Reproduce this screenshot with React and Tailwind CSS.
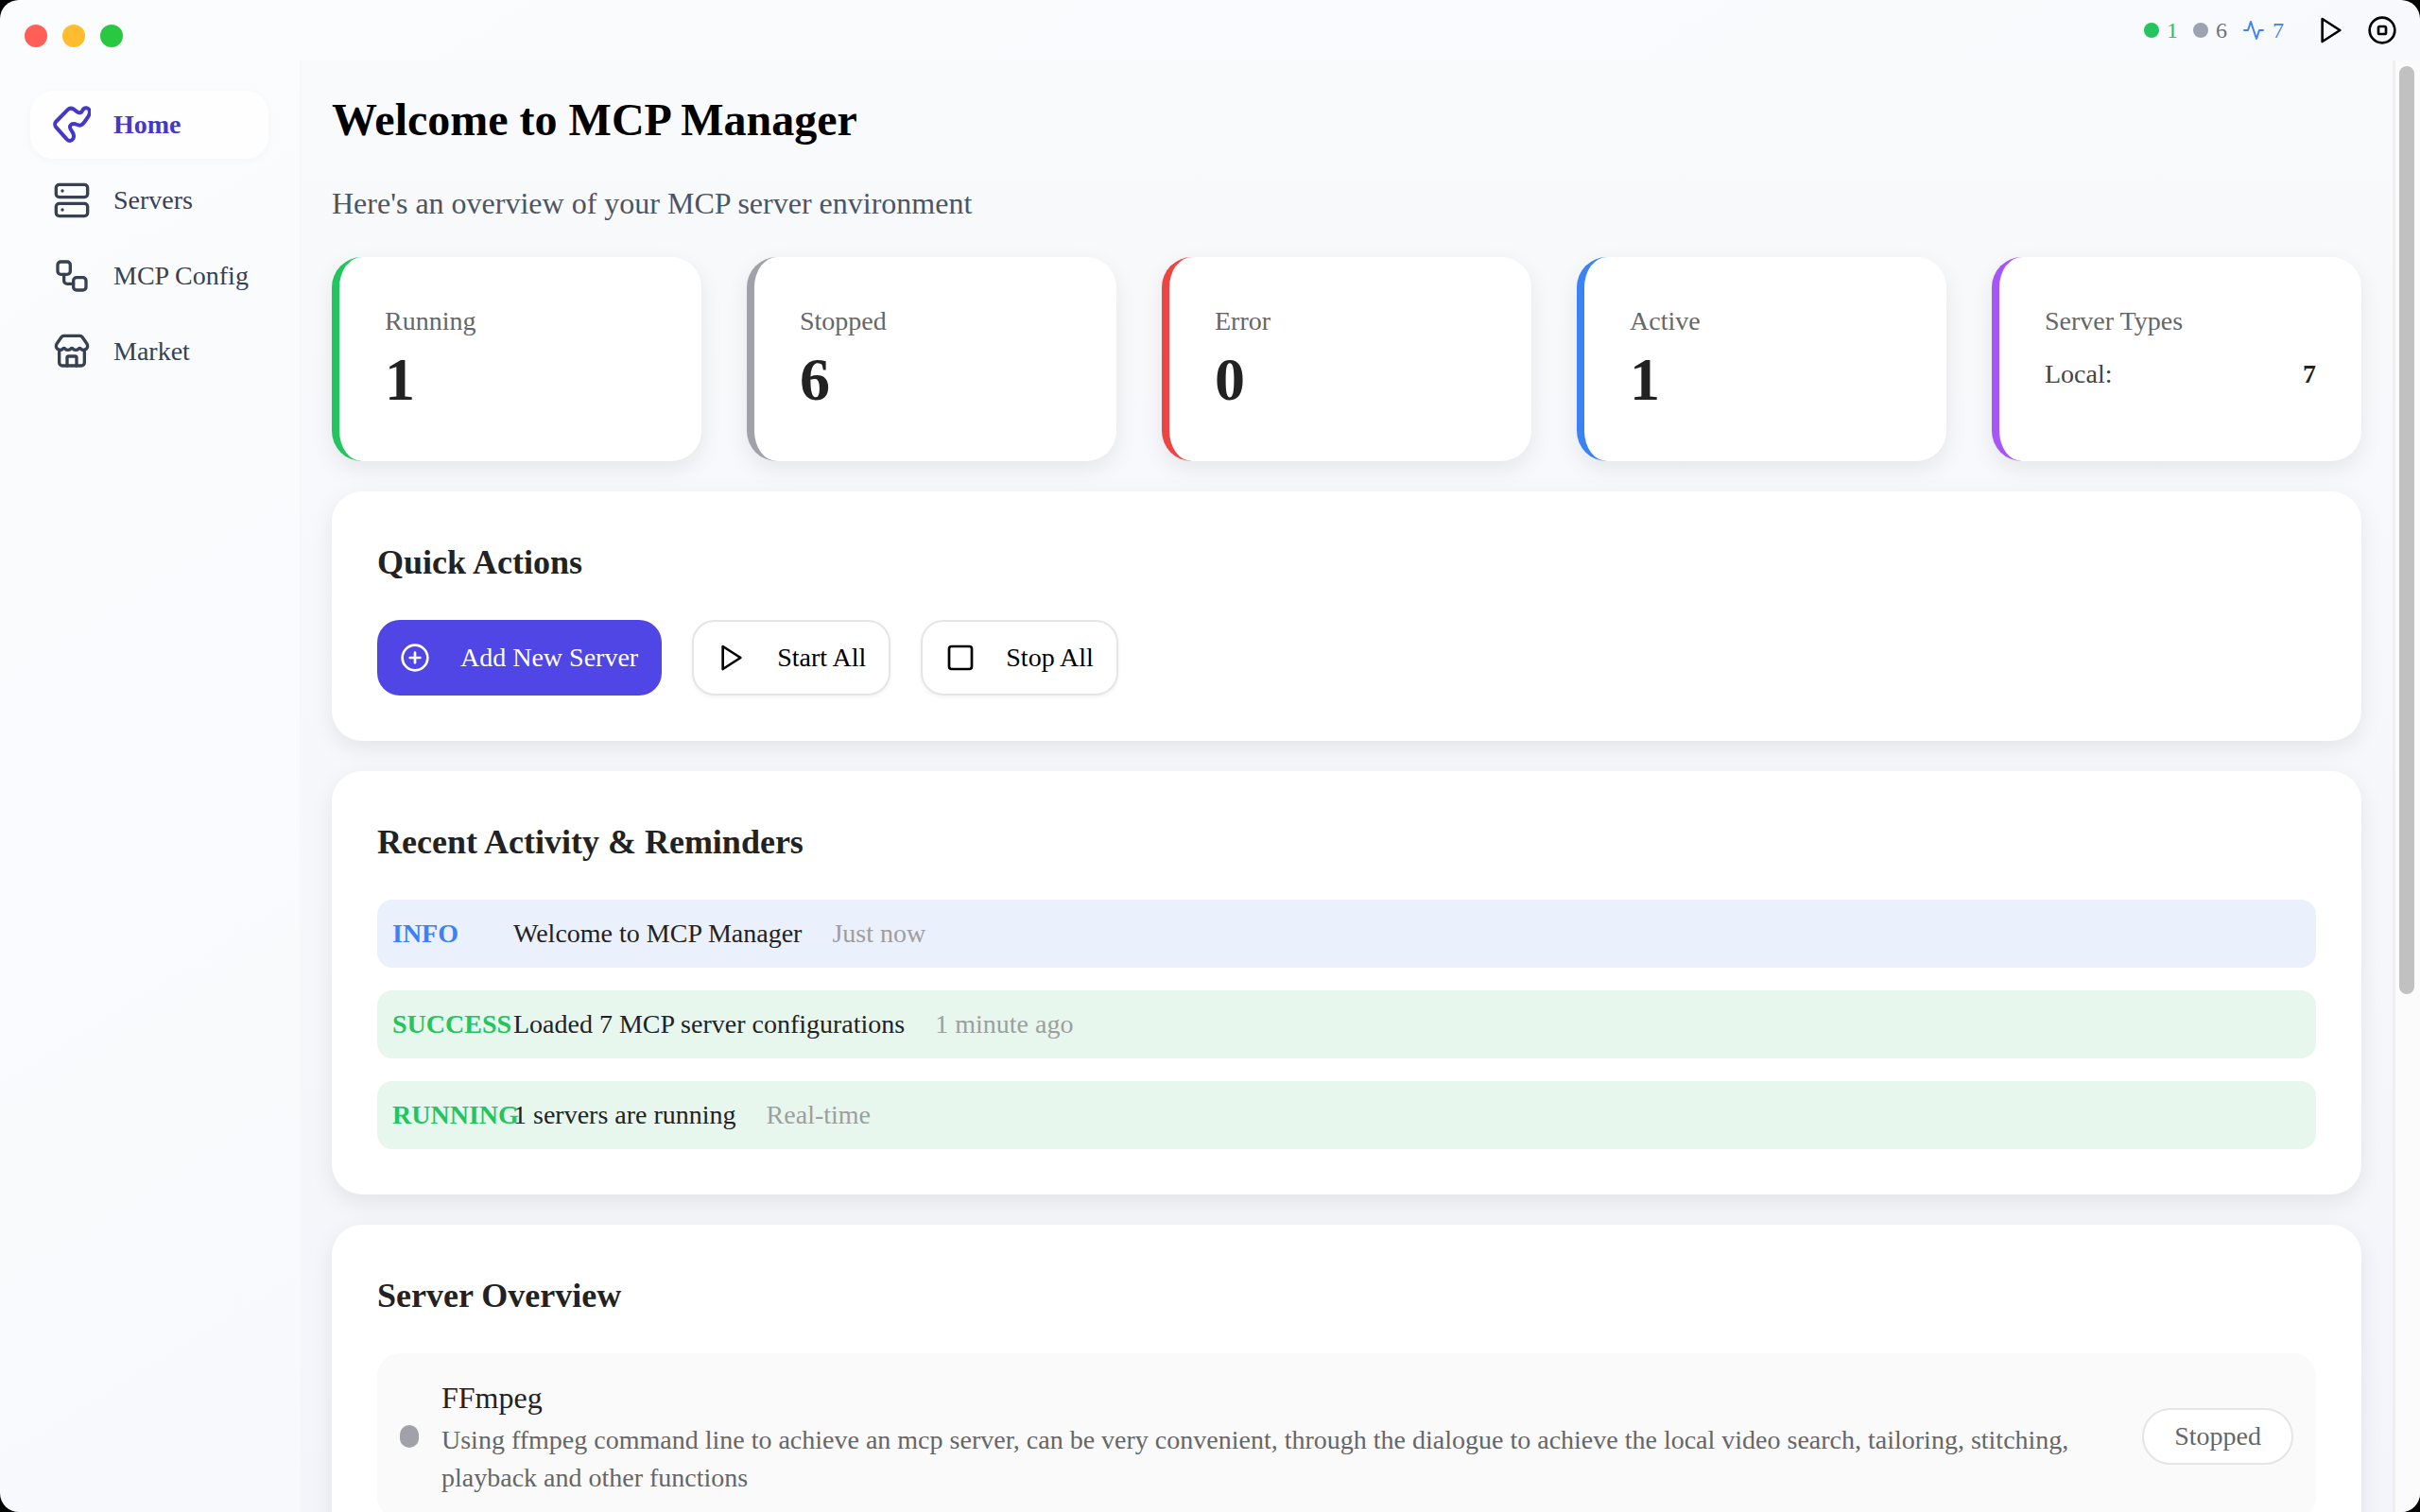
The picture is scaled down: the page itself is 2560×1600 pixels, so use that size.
import { Server, Workflow, Store, CirclePlus, Square, CircleStop } from "lucide-react";

const PlayIcon = ({ className }) => (
  <svg viewBox="0 0 24 24" fill="none" stroke="currentColor" strokeWidth="2" strokeLinecap="round" strokeLinejoin="round" className={className}>
    <polygon points="5 3 19 12 5 21 5 3" />
  </svg>
);

const ActivityIcon = ({ className }) => (
  <svg viewBox="0 0 24 24" fill="none" stroke="currentColor" strokeWidth="2" strokeLinecap="round" strokeLinejoin="round" className={className}>
    <path d="M22 12h-4l-3 9L9 3l-3 9H2" />
  </svg>
);

const HomeIcon = ({ size }) => (
  <svg width={size} height={size} viewBox="0 0 24 24" fill="none" stroke="currentColor" strokeWidth="2.4" strokeLinecap="round" strokeLinejoin="round">
    <path d="M1.8 10.2 9.2 2.6C10.4 1.4 12 1.4 13.2 2.2L15.6 4C16.8 4.8 18 4.4 18.6 3.2 19.2 1.8 20.4 1.2 21.6 1.4 23.2 1.8 23.6 3.4 23.2 5 22.8 6.8 21.4 8.2 20.6 9.4 19.6 11 18.6 12.4 17 12.4 15.6 12.4 14.6 11.4 13.4 11.4 11.8 11.4 10.6 12.2 10.8 13.6 11 15 12.4 16.4 13 18 13.4 19.4 13.2 20.8 12.2 21.6 11.2 22.4 9.8 22.2 8.8 21.2L2 13.6C1.2 12.6 1 11 1.8 10.2Z" />
  </svg>
);

function NavItem({ icon: Icon, label, active }) {
  return (
    <div
      className={
        active
          ? "flex h-[72px] items-center gap-6 rounded-3xl bg-white/80 pl-6 text-[28px] font-bold text-[#4338ca] shadow-[0_2px_8px_rgba(0,0,0,0.03)]"
          : "flex h-[72px] items-center gap-6 rounded-3xl pl-6 text-[28px] text-[#374151]"
      }
    >
      <Icon size={40} />
      <span>{label}</span>
    </div>
  );
}

function StatCard({ label, value, border }) {
  return (
    <div className={`h-[216px] rounded-[32px] border-l-8 bg-white p-12 shadow-[0_8px_24px_rgba(0,0,0,0.08)] ${border}`}>
      <div className="text-[28px] leading-[40px] text-[#666666]">{label}</div>
      <div className="pt-0.5 text-[64px] leading-[80px] font-bold text-[#222222]">{value}</div>
    </div>
  );
}

function ActionButton({ icon: Icon, label, primary }) {
  return (
    <button
      className={
        primary
          ? "flex h-20 items-center gap-8 rounded-3xl bg-[#4f46e5] pr-[25px] pl-6 text-[28px] text-white"
          : "flex h-20 items-center gap-8 rounded-3xl border-2 border-[#e5e5e5] bg-white px-6 text-[28px] text-black shadow-[0_2px_4px_rgba(0,0,0,0.05)]"
      }
    >
      <Icon className="size-8" />
      {label}
    </button>
  );
}

function ActivityRow({ type, message, time, bg, color }) {
  return (
    <div className={`flex h-[72px] items-center gap-8 rounded-2xl pl-4 text-[28px] ${bg}`}>
      <div className="flex items-center">
        <span className={`w-[128px] shrink-0 font-bold whitespace-nowrap ${color}`}>{type}</span>
        <span className="text-[#222222]">{message}</span>
      </div>
      <span className="text-[#9e9e9e]">{time}</span>
    </div>
  );
}

function Card({ title, children, className = "" }) {
  return (
    <section className={`rounded-[32px] bg-white p-12 shadow-[0_8px_24px_rgba(0,0,0,0.08)] ${className}`}>
      <h2 className="mb-[34px] text-[36px] leading-[54px] font-bold text-[#222222]">{title}</h2>
      {children}
    </section>
  );
}

export default function App() {
  return (
    <div className="h-screen overflow-hidden bg-black font-['Liberation_Serif',serif]">
      <div className="flex h-full flex-col overflow-hidden rounded-[20px] bg-gradient-to-br from-[#fafcfe] to-[#f6f7fb]">
        <header className="flex h-16 shrink-0 items-center justify-between pr-6 pl-[26px]">
          <div className="flex gap-4 pt-3">
            <div className="size-6 rounded-full bg-[#ff5f57]" />
            <div className="size-6 rounded-full bg-[#febc2e]" />
            <div className="size-6 rounded-full bg-[#28c840]" />
          </div>
          <div className="flex items-center text-2xl">
            <div className="flex items-center gap-2 text-[#22c55e]">
              <div className="size-4 rounded-full bg-[#22c55e]" />
              <span>1</span>
            </div>
            <div className="ml-4 flex items-center gap-2 text-[#6b7280]">
              <div className="size-4 rounded-full bg-[#9ca3af]" />
              <span>6</span>
            </div>
            <div className="ml-4 flex items-center gap-2 text-[#3b82f6]">
              <ActivityIcon className="size-6" />
              <span>7</span>
            </div>
            <PlayIcon className="ml-[34px] size-8 text-black" />
            <CircleStop className="ml-[22px] size-8 text-black" />
          </div>
        </header>

        <div className="flex min-h-0 flex-1">
          <aside className="w-[319px] shrink-0 border-r-2 border-[#f6f7f9] pt-8 pl-8">
            <nav className="flex w-[252px] flex-col gap-2">
              <NavItem icon={HomeIcon} label="Home" active />
              <NavItem icon={Server} label="Servers" />
              <NavItem icon={Workflow} label="MCP Config" />
              <NavItem icon={Store} label="Market" />
            </nav>
          </aside>

          <main className="min-w-0 flex-1 overflow-hidden bg-gradient-to-b from-[#f9fafc] to-[#f3f5fa] pt-[33px] pr-[33px] pl-8">
            <h1 className="mb-[34px] text-[48px] leading-[60px] font-bold text-black">Welcome to MCP Manager</h1>
            <p className="mb-[33px] text-[32px] leading-[48px] text-[#4b5563]">Here's an overview of your MCP server environment</p>

            <div className="mb-8 grid grid-cols-5 gap-12">
              <StatCard label="Running" value="1" border="border-[#22c55e]" />
              <StatCard label="Stopped" value="6" border="border-[#a1a1aa]" />
              <StatCard label="Error" value="0" border="border-[#ef4444]" />
              <StatCard label="Active" value="1" border="border-[#3b82f6]" />
              <div className="h-[216px] rounded-[32px] border-l-8 border-[#a855f7] bg-white p-12 shadow-[0_8px_24px_rgba(0,0,0,0.08)]">
                <div className="mb-4 text-[28px] leading-[40px] text-[#666666]">Server Types</div>
                <div className="flex justify-between text-[28px] leading-[40px] text-[#444444]">
                  <span>Local:</span>
                  <span className="font-bold text-[#222222]">7</span>
                </div>
              </div>
            </div>

            <Card title="Quick Actions" className="mb-8">
              <div className="flex gap-8">
                <ActionButton icon={CirclePlus} label="Add New Server" primary />
                <ActionButton icon={PlayIcon} label="Start All" />
                <ActionButton icon={Square} label="Stop All" />
              </div>
            </Card>

            <Card title="Recent Activity & Reminders" className="mb-8">
              <div className="flex flex-col gap-6">
                <ActivityRow type="INFO" message="Welcome to MCP Manager" time="Just now" bg="bg-[#eaf0fc]" color="text-[#3b82f6]" />
                <ActivityRow type="SUCCESS" message="Loaded 7 MCP server configurations" time="1 minute ago" bg="bg-[#e7f7ee]" color="text-[#22c55e]" />
                <ActivityRow type="RUNNING" message="1 servers are running" time="Real-time" bg="bg-[#e7f7ee]" color="text-[#22c55e]" />
              </div>
            </Card>

            <Card title="Server Overview">
              <div className="flex items-center gap-6 rounded-3xl bg-[#fafafa] p-6">
                <div className="h-6 w-5 shrink-0 rounded-full bg-[#a1a1aa]" />
                <div className="flex-1">
                  <div className="mb-0.5 text-[32px] leading-[46px] text-[#222222]">FFmpeg</div>
                  <div className="text-[28px] leading-[40px] text-[#666666]">
                    Using ffmpeg command line to achieve an mcp server, can be very convenient, through the dialogue to achieve the local video search, tailoring, stitching, playback and other functions
                  </div>
                </div>
                <div className="shrink-0 rounded-full border-2 border-[#e5e5e5] bg-white px-8 py-2.5 text-[28px] leading-[36px] text-[#666666]">Stopped</div>
              </div>
            </Card>
          </main>

          <div className="w-[29px] shrink-0 border-l-[3px] border-[#efefef] bg-[#fbfbfc] pt-1.5 pl-1">
            <div className="h-[982px] w-4 rounded-full bg-[#c1c1c1]" />
          </div>
        </div>
      </div>
    </div>
  );
}
